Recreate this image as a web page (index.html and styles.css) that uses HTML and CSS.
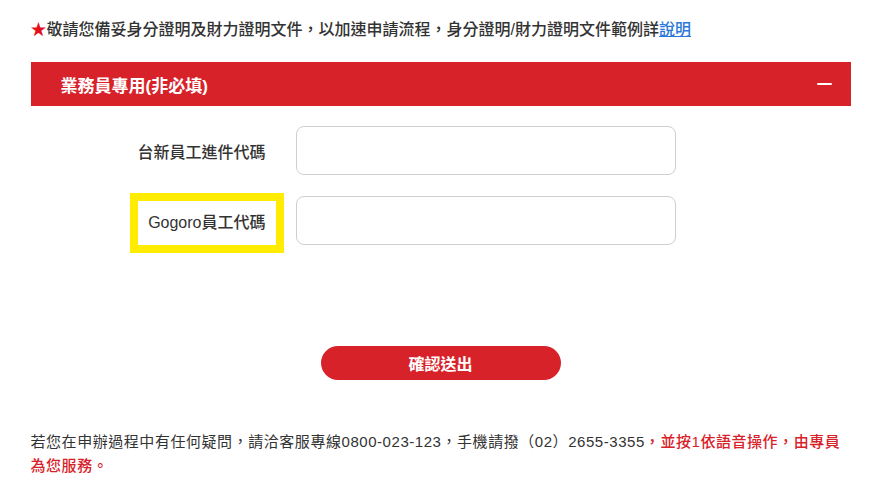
FILE: index.html
```html
<html>

<head>
    <meta charset="utf-8">
    <title>業務員專用</title>
    <link rel="stylesheet" href="styles.css">
</head>

<body>
    <div class="page">
        <p class="notice"><span class="star">★</span>敬請您備妥身分證明及財力證明文件，以加速申請流程，身分證明/財力證明文件範例詳<a href="#">說明</a></p>

        <div class="panel-head">
            <span class="panel-title">業務員專用(非必填)</span>
            <span class="collapse-icon"></span>
        </div>

        <div class="form-grid">
            <label class="field-label" for="taishin-code">台新員工進件代碼</label>
            <input class="field-input" type="text" id="taishin-code">
            <label class="field-label" for="gogoro-code"><span class="highlight">Gogoro員工代碼</span></label>
            <input class="field-input" type="text" id="gogoro-code">
        </div>

        <div class="actions">
            <button class="submit-btn" type="button">確認送出</button>
        </div>

        <p class="help">若您在申辦過程中有任何疑問，請洽客服專線0800-023-123，手機請撥（02）2655-3355<span class="help-red">，並按1依語音操作，由專員<br>為您服務。</span></p>
    </div>
</body>

</html>
```

FILE: styles.css
```css
* {
    margin: 0;
    padding: 0;
    box-sizing: border-box;
}

body {
    font-family: "Liberation Sans", "Noto Sans CJK TC", sans-serif;
    color: #333;
    background: #fff;
    padding-top: 18px;
}

.page {
    width: 820px;
    margin: 0 auto;
}

.notice {
    font-size: 16px;
    line-height: 24px;
    font-weight: 500;
    height: 44px;
}

.star {
    color: #e3101b;
}

.notice a {
    color: #2a77d9;
    text-decoration: underline;
}

.panel-head {
    height: 44px;
    background: #d8222a;
    color: #fff;
    display: flex;
    align-items: center;
    justify-content: space-between;
    padding: 0 19px 0 30px;
}

.panel-title {
    font-size: 17px;
    font-weight: bold;
}

.collapse-icon {
    width: 15px;
    height: 2px;
    background: #fff;
    border-radius: 1px;
}

.form-grid {
    display: grid;
    grid-template-columns: 235px 380px;
    column-gap: 30px;
    row-gap: 21px;
    align-items: center;
    margin-top: 20px;
}

.field-label {
    text-align: right;
    font-size: 16px;
    line-height: 24px;
    font-weight: 500;
    padding-top: 4px;
}

.highlight {
    display: inline-block;
    outline: 8px solid #ffec00;
    outline-offset: 10px;
}

.field-input {
    height: 49px;
    border: 1px solid #cfcfcf;
    border-radius: 8px;
    background: #fff;
}

.actions {
    display: flex;
    justify-content: center;
    margin-top: 101px;
}

.submit-btn {
    width: 240px;
    height: 34px;
    border: none;
    border-radius: 17px;
    background: #d8222a;
    color: #fff;
    font-family: inherit;
    font-size: 16px;
    font-weight: bold;
}

.help {
    margin-top: 50px;
    font-size: 15px;
    line-height: 24px;
    letter-spacing: 0.55px;
}

.help-red {
    color: #d8222a;
    font-weight: 500;
}
```
